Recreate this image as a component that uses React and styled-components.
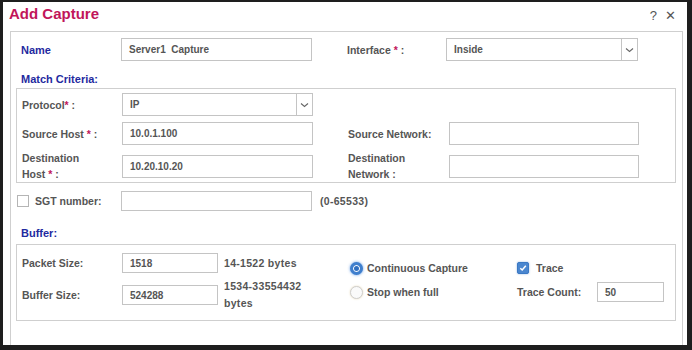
import React from 'react';
import styled, { createGlobalStyle } from 'styled-components';

const GlobalStyle = createGlobalStyle`
  html, body {
    margin: 0;
    padding: 0;
    background: #1c1c1c;
  }
  body {
    font-family: "Liberation Sans", Arial, sans-serif;
  }
`;

const Dialog = styled.div`
  box-sizing: border-box;
  width: 692px;
  height: 350px;
  background: #fff;
  border-style: solid;
  border-color: #1e1e1e;
  border-width: 2px 5px 5px 3px;
  display: flex;
  flex-direction: column;
  overflow: hidden;
`;

const TitleBar = styled.div`
  height: 29px;
  display: flex;
  align-items: center;
  justify-content: space-between;
  padding: 0 11px 0 6px;
  flex-shrink: 0;
`;

const Title = styled.div`
  color: #c1155a;
  font-size: 15px;
  font-weight: bold;
  margin-top: -6px;
`;

const TitleTools = styled.div`
  display: flex;
  gap: 8px;
  color: #555;
  font-size: 13px;
  margin-top: -3px;
`;

const Panel = styled.div`
  flex: 1;
  margin: 0 4px 0 7px;
  border: 1px solid #cfcfcf;
  border-bottom: none;
  padding: 6px 5px 0 4px;
`;

const Row = styled.div`
  display: flex;
  align-items: center;
  min-height: ${p => p.$h || 23}px;
  height: ${p => (p.$fixed ? p.$h + 'px' : 'auto')};
  padding-left: ${p => p.$pl || 0}px;
  margin-top: ${p => p.$mt || 0}px;
`;

const Label = styled.div`
  width: ${p => p.$w || 100}px;
  flex-shrink: 0;
  color: #555;
  font-size: 10.5px;
  font-weight: bold;
  line-height: 16px;
  margin-left: ${p => p.$ml || 0}px;
`;

const BlueLabel = styled.div`
  width: ${p => p.$w || 100}px;
  flex-shrink: 0;
  color: #1f2aa0;
  font-size: 11px;
  font-weight: bold;
`;

const SectionTitle = styled.div`
  color: #1f2aa0;
  font-size: 11px;
  font-weight: bold;
  padding-left: 6px;
  margin-top: ${p => p.$mt || 0}px;
  margin-bottom: ${p => p.$mb || 0}px;
  line-height: 14px;
`;

const Req = styled.span`
  color: #c1155a;
`;

const Field = styled.div`
  box-sizing: border-box;
  width: ${p => p.$w}px;
  height: ${p => p.$h || 23}px;
  border: 1px solid #c4c4c4;
  background: #fff;
  display: flex;
  align-items: center;
  color: #555;
  font-size: 10px;
  font-weight: bold;
  padding-left: 7px;
  flex-shrink: 0;
`;

const SelectField = styled(Field)`
  padding-right: 0;
  justify-content: space-between;
`;

const Arrow = styled.div`
  width: 15px;
  height: 100%;
  border-left: 1px solid #c4c4c4;
  display: flex;
  align-items: center;
  justify-content: center;
`;

const Group = styled.div`
  margin-left: 1px;
  margin-right: 1px;
  border: 1px solid #cfcfcf;
  padding: ${p => p.$pad};
  display: flex;
  flex-direction: ${p => p.$dir || 'column'};
  gap: ${p => p.$gap || 0}px;
`;

const Spacer = styled.div`
  width: ${p => p.$w}px;
  flex-shrink: 0;
`;

const Note = styled.div`
  color: #555;
  font-size: 10.5px;
  font-weight: bold;
  line-height: 17px;
  letter-spacing: 0.3px;
  margin-left: ${p => p.$ml || 0}px;
  width: ${p => p.$w || 'auto'};
`;

const Check = styled.div`
  box-sizing: border-box;
  width: 12px;
  height: 12px;
  border: 1px solid ${p => (p.$on ? '#3a78c4' : '#b5b5b5')};
  background: ${p => (p.$on ? '#4a86cf' : '#fff')};
  border-radius: ${p => (p.$on ? 2 : 0)}px;
  display: flex;
  align-items: center;
  justify-content: center;
  flex-shrink: 0;
  box-shadow: ${p => (p.$on ? '0 0 2px rgba(60,120,200,0.6)' : 'none')};
`;

const Radio = styled.div`
  box-sizing: border-box;
  width: 13px;
  height: 13px;
  border-radius: 50%;
  flex-shrink: 0;
  border: ${p => (p.$on ? '3px solid #3f7fcd' : '1px solid #cfcfcf')};
  background: ${p => (p.$on ? '#2f6fc0' : '#fafafa')};
  box-shadow: ${p =>
    p.$on ? '0 0 3px rgba(60,130,220,0.8), inset 0 0 0 1px #fff' : '0 0 2px rgba(220,200,150,0.7)'};
`;

const OptionLabel = styled.div`
  color: #555;
  font-size: 10.5px;
  font-weight: bold;
  margin-left: ${p => p.$ml ?? 4}px;
  width: ${p => (p.$w ? p.$w + 'px' : 'auto')};
  flex-shrink: 0;
`;

const Col = styled.div`
  display: flex;
  flex-direction: column;
  gap: ${p => p.$gap || 12}px;
  padding-top: ${p => p.$pt || 0}px;
  width: ${p => (p.$w ? p.$w + 'px' : 'auto')};
  flex-shrink: 0;
`;

const ChevronDown = () => (
  <svg width="9" height="6" viewBox="0 0 9 6">
    <path d="M1 1.5 L4.5 4.5 L8 1.5" fill="none" stroke="#666" strokeWidth="1.1" />
  </svg>
);

const Tick = () => (
  <svg width="8" height="8" viewBox="0 0 8 8">
    <path d="M1.3 4.2 L3.2 6 L6.8 1.8" fill="none" stroke="#fff" strokeWidth="1.5" />
  </svg>
);

export default function App() {
  return (
    <>
      <GlobalStyle />
      <Dialog>
        <TitleBar>
          <Title>Add Capture</Title>
          <TitleTools>
            <span>?</span>
            <span>✕</span>
          </TitleTools>
        </TitleBar>
        <Panel>
          <Row $pl={6}>
            <BlueLabel>Name</BlueLabel>
            <Field $w={191}>Server1&nbsp; Capture</Field>
            <Spacer $w={35} />
            <Label $w={99}>
              Interface <Req>*</Req> :
            </Label>
            <SelectField $w={192}>
              Inside
              <Arrow>
                <ChevronDown />
              </Arrow>
            </SelectField>
          </Row>

          <SectionTitle $mt={11} $mb={2}>Match Criteria:</SectionTitle>
          <Group $pad="4px 5px 0" $gap={5}>
            <Row>
              <Label>
                Protocol<Req>*</Req> :
              </Label>
              <SelectField $w={191}>
                IP
                <Arrow>
                  <ChevronDown />
                </Arrow>
              </SelectField>
            </Row>
            <Row $mt={1}>
              <Label>
                Source Host <Req>*</Req> :
              </Label>
              <Field $w={191}>10.0.1.100</Field>
              <Spacer $w={35} />
              <Label $w={101}>Source Network:</Label>
              <Field $w={190} />
            </Row>
            <Row $h={32}>
              <Label>
                Destination
                <br />
                Host <Req>*</Req> :
              </Label>
              <Field $w={191}>10.20.10.20</Field>
              <Spacer $w={35} />
              <Label $w={101}>
                Destination
                <br />
                Network :
              </Label>
              <Field $w={190} />
            </Row>
          </Group>

          <Row $h={20} $mt={8} $pl={2}>
            <Check />
            <Label $w={86} $ml={6}>
              SGT number:
            </Label>
            <Field $w={191} $h={20} />
            <Note $ml={8}>(0-65533)</Note>
          </Row>

          <SectionTitle $mt={15} $mb={4}>Buffer:</SectionTitle>
          <Group $dir="row" $pad="8px 5px 15px">
            <Col $w={100}>
              <Row $h={20} $fixed>
                <Label>Packet Size:</Label>
              </Row>
              <Row $h={20} $fixed>
                <Label>Buffer Size:</Label>
              </Row>
            </Col>
            <Col $w={228}>
              <Row $h={20} $fixed>
                <Field $w={96} $h={20}>1518</Field>
                <Note $ml={6}>14-1522 bytes</Note>
              </Row>
              <Row $h={20} $fixed>
                <Field $w={96} $h={20}>524288</Field>
                <Note $ml={6} $w="90px">
                  1534-33554432 bytes
                </Note>
              </Row>
            </Col>
            <Col $w={167} $pt={5} $gap={4}>
              <Row $h={20} $fixed>
                <Radio $on />
                <OptionLabel>Continuous Capture</OptionLabel>
              </Row>
              <Row $h={20} $fixed>
                <Radio />
                <OptionLabel>Stop when full</OptionLabel>
              </Row>
            </Col>
            <Col $pt={5} $gap={4}>
              <Row $h={20} $fixed>
                <Check $on>
                  <Tick />
                </Check>
                <OptionLabel $ml={7}>Trace</OptionLabel>
              </Row>
              <Row $h={20} $fixed>
                <OptionLabel $ml={0} $w={80}>
                  Trace Count:
                </OptionLabel>
                <Field $w={67} $h={20}>50</Field>
              </Row>
            </Col>
          </Group>
        </Panel>
      </Dialog>
    </>
  );
}
